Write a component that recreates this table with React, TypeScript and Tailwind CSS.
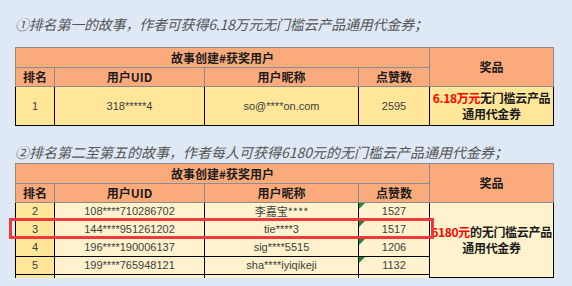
import React from "react";

const cjk = { fontFamily: '"Noto Sans CJK SC", "Noto Sans", sans-serif' };
const data = { fontFamily: '"Liberation Sans", "Noto Sans CJK SC", sans-serif' };

const rows = [
  { rank: "2", uid: "108****710286702", name: "李嘉宝****", likes: "1527" },
  { rank: "3", uid: "144****951261202", name: "tie****3", likes: "1517" },
  { rank: "4", uid: "196****190006137", name: "sig****5515", likes: "1206" },
  { rank: "5", uid: "199****765948121", name: "sha****iyiqikeji", likes: "1132" },
];

function Cols() {
  return (
    <colgroup>
      <col className="w-[39px]" />
      <col className="w-[150px]" />
      <col className="w-[154px]" />
      <col className="w-[71px]" />
      <col className="w-[124px]" />
    </colgroup>
  );
}

function Head() {
  const th = "border border-[#8c8c8c] bg-[#fbab7b] text-[12px] font-bold text-[#1c1c1c] text-center p-0";
  return (
    <thead style={cjk}>
      <tr className="h-[20px]">
        <th colSpan={4} className={th}>故事创建#获奖用户</th>
        <th rowSpan={2} className={th}>奖品</th>
      </tr>
      <tr className="h-[19px]">
        <th className={th}>排名</th>
        <th className={th}>用户UID</th>
        <th className={th}>用户昵称</th>
        <th className={th}>点赞数</th>
      </tr>
    </thead>
  );
}

function Prize({ amount, rest }: { amount: string; rest: string }) {
  return (
    <div style={cjk} className="whitespace-nowrap text-[12px] font-bold leading-[16px] tracking-[-0.3px] text-[#1c1c1c]">
      <span className="text-[#ff0000]">{amount}</span>
      {rest}
      <br />
      通用代金券
    </div>
  );
}

export default function App() {
  const td = "border border-black p-0 text-center text-[11px] text-[#404040]";
  return (
    <div className="relative h-[286px] w-[572px] overflow-hidden bg-[#dfe8f5] pl-[15px]">
      <p style={cjk} className="pt-[14px] text-[14px] italic leading-[20px] text-[#555555] tracking-[-0.2px]">
        ①排名第一的故事，作者可获得6.18万元无门槛云产品通用代金券；
      </p>
      <table className="mt-[13px] w-[538px] table-fixed border-collapse">
        <Cols />
        <Head />
        <tbody style={data}>
          <tr className="h-[39px] bg-[#ffe699]">
            <td className={td}>1</td>
            <td className={td}>318*****4</td>
            <td className={td}>so@****on.com</td>
            <td className={td}>2595</td>
            <td className={td}>
              <Prize amount="6.18万元" rest="无门槛云产品" />
            </td>
          </tr>
        </tbody>
      </table>
      <p style={cjk} className="mt-[16px] text-[14px] italic leading-[20px] text-[#555555]">
        ②排名第二至第五的故事，作者每人可获得6180元的无门槛云产品通用代金券；
      </p>
      <table className="mt-[1px] w-[538px] table-fixed border-collapse">
        <Cols />
        <Head />
        <tbody style={data}>
          {rows.map((r, i) => (
            <tr key={r.rank} className="h-[18px]">
              <td className={`${td} bg-[#ffe699]`}>{r.rank}</td>
              <td className={`${td} bg-[#fff2cc]`}>{r.uid}</td>
              <td className={`${td} bg-[#fff2cc]`} style={i === 0 ? cjk : data}>{r.name}</td>
              <td className={`${td} relative bg-[#fff2cc]`}>
                <span className="absolute left-0 top-0 h-0 w-0 border-l-[6px] border-b-[6px] border-l-[#1b8a2a] border-b-transparent" />
                {r.likes}
              </td>
              {i === 0 && (
                <td rowSpan={5} className={`${td} bg-[#fff2cc]`}>
                  <Prize amount="6180元" rest="的无门槛云产品" />
                </td>
              )}
            </tr>
          ))}
          <tr className="h-[3px]">
            <td className="border-x border-black bg-[#ffe699] p-0" />
            <td className="border-x border-black bg-[#fff2cc] p-0" />
            <td className="border-x border-black bg-[#fff2cc] p-0" />
            <td className="border-x border-black bg-[#fff2cc] p-0" />
          </tr>
        </tbody>
      </table>
      <div className="absolute left-[9px] top-[218px] h-[21px] w-[425px] border-[3px] border-[#ee3a3a]" />
    </div>
  );
}
